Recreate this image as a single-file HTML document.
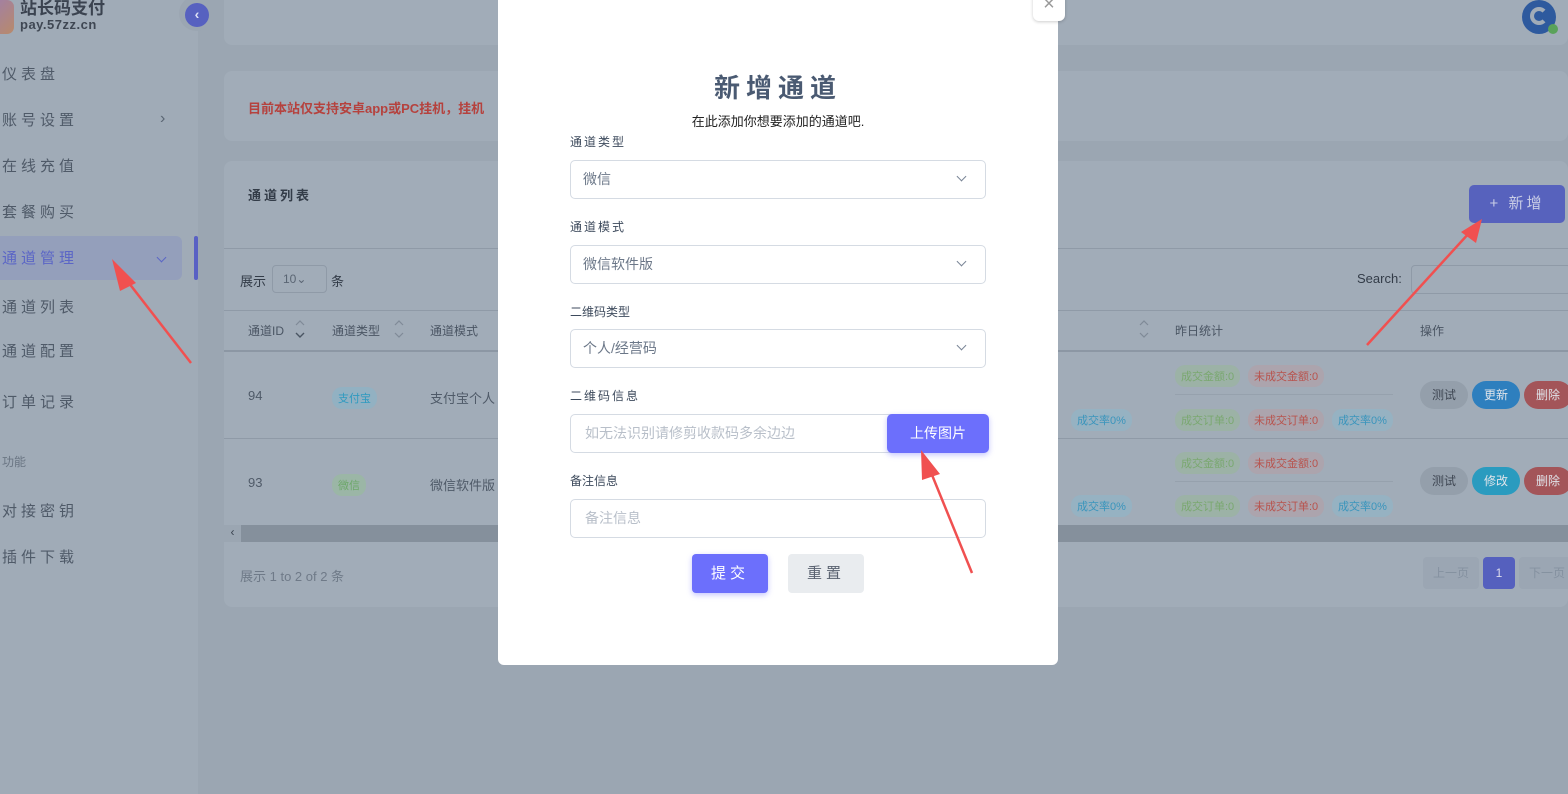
<!DOCTYPE html>
<html><head><meta charset="utf-8"><style>
*{box-sizing:border-box;margin:0;padding:0}
body{width:1568px;height:794px;overflow:hidden;background:#9ba6b2;font-family:"Liberation Sans","Noto Sans CJK SC",sans-serif;position:relative;color:#4a5563}
.a{position:absolute}
.card{position:absolute;background:#a1acb8;border-radius:8px}
.side{left:0;top:0;width:198px;height:794px;background:#a0abb7}
.nav{position:absolute;left:2px;font-size:15px;letter-spacing:4px;color:#4f5a68;line-height:18px}
.tag{position:absolute;font-size:11px;padding:3px 6px;border-radius:10px;white-space:nowrap}
.g{background:#9cb2a6;color:#7aa870}.r{background:#aca4ad;color:#b8534d}.b{background:#96b2c2;color:#3a95bc}
.btn{position:absolute;font-size:12px;color:#e0e4ea;border-radius:14px;width:48px;height:28px;line-height:28px;text-align:center}
.modal{position:absolute;left:498px;top:0;width:560px;height:665px;background:#fff;border-radius:0 0 6px 6px}
.lbl{position:absolute;left:72px;font-size:12px;color:#3d4a5c;letter-spacing:2px}
.inp{position:absolute;left:72px;width:416px;height:39px;border:1px solid #d5dbe3;border-radius:5px;font-size:14px;color:#6b7788;padding-left:12px;line-height:37px}
.chev{position:absolute;right:20px;top:12px;width:7px;height:7px;border-right:1.3px solid #7a8596;border-bottom:1.3px solid #7a8596;transform:rotate(45deg)}
.sort{position:absolute;width:12px;height:20px}
</style></head><body>
<div class="a side"></div>
<div class="a" style="left:-8px;top:0;width:22px;height:34px;border-radius:7px;background:linear-gradient(135deg,#a07fa8,#b88a6a)"></div>
<div class="a" style="left:20px;top:0;font-size:17px;line-height:18px;font-weight:bold;color:#3b4350">站长码支付</div>
<div class="a" style="left:20px;top:17px;font-size:13px;line-height:15px;color:#3f4753;letter-spacing:.5px;font-weight:bold">pay.57zz.cn</div>
<div class="a" style="left:179px;top:-4px;width:35px;height:35px;border-radius:50%;background:#9ba6b2"></div>
<div class="a" style="left:185px;top:3px;width:24px;height:24px;border-radius:50%;background:#5761c0;color:#dfe2f5;font-size:14px;text-align:center;line-height:23px;font-weight:bold">‹</div>
<div class="nav" style="top:66px">仪表盘</div>
<div class="nav" style="top:112px">账号设置</div><div class="a" style="left:160px;top:110px;color:#5a6573;font-size:16px">›</div>
<div class="nav" style="top:158px">在线充值</div>
<div class="nav" style="top:204px">套餐购买</div>
<div class="a" style="left:0;top:236px;width:182px;height:44px;background:#949fbb;border-radius:0 6px 6px 0"></div>
<div class="nav" style="top:250px;color:#5b66c6">通道管理</div>
<div class="a" style="left:158px;top:254px;width:7px;height:7px;border-right:1.3px solid #5b66c6;border-bottom:1.3px solid #5b66c6;transform:rotate(45deg)"></div>
<div class="a" style="left:194px;top:236px;width:4px;height:44px;background:#5961c4;border-radius:2px"></div>
<div class="nav" style="top:299px">通道列表</div>
<div class="nav" style="top:343px">通道配置</div>
<div class="nav" style="top:394px">订单记录</div>
<div class="a" style="left:2px;top:453px;font-size:12px;color:#6a7583">功能</div>
<div class="nav" style="top:503px">对接密钥</div>
<div class="nav" style="top:549px">插件下载</div>

<div class="card" style="left:224px;top:-10px;width:1344px;height:55px"></div>
<div class="a" style="left:1522px;top:0;width:34px;height:34px;border-radius:50%;background:#2e5a9e"></div>
<div class="a" style="left:1530px;top:7px;width:18px;height:18px;border-radius:50%;border:4px solid #a1acb8;border-right-color:transparent"></div>
<div class="a" style="left:1548px;top:24px;width:10px;height:10px;border-radius:50%;background:#5aa25a"></div>
<div class="card" style="left:224px;top:71px;width:1344px;height:70px"></div>
<div class="a" style="left:248px;top:98px;font-size:13px;font-weight:bold;color:#b5423e">目前本站仅支持安卓app或PC挂机，挂机</div>
<div class="card" style="left:224px;top:161px;width:1344px;height:446px"></div>
<div class="a" style="left:248px;top:185px;font-size:13px;font-weight:bold;color:#333c48;letter-spacing:3px">通道列表</div>
<div class="a" style="left:1469px;top:185px;width:96px;height:38px;background:#5762bd;border-radius:5px;color:#c9cde6;font-size:15px;letter-spacing:3px;line-height:38px;text-align:center">+ 新增</div>
<div class="a" style="left:224px;top:248px;width:1344px;height:1px;background:#8f9aa7"></div>
<div class="a" style="left:240px;top:271px;font-size:13px;color:#333c48">展示</div>
<div class="a" style="left:272px;top:265px;width:55px;height:28px;border:1px solid #8f9aa7;border-radius:4px;font-size:12px;color:#5a6573;padding:6px 10px">10⌄</div>
<div class="a" style="left:331px;top:271px;font-size:13px;color:#333c48">条</div>
<div class="a" style="left:1357px;top:271px;font-size:13px;color:#333c48">Search:</div>
<div class="a" style="left:1411px;top:265px;width:160px;height:29px;border:1px solid #8f9aa7;border-radius:4px"></div>
<div class="a" style="left:224px;top:310px;width:1344px;height:1px;background:#8f9aa7"></div>
<div class="a" style="left:224px;top:350px;width:1344px;height:2px;background:#8c97a4"></div>
<div class="a" style="left:248px;top:322px;font-size:12px;color:#4a5563">通道ID</div>
<div class="a" style="left:332px;top:322px;font-size:12px;color:#4a5563">通道类型</div>
<div class="a" style="left:430px;top:322px;font-size:12px;color:#4a5563">通道模式</div>
<div class="a" style="left:1175px;top:322px;font-size:12px;color:#4a5563">昨日统计</div>
<div class="a" style="left:1420px;top:322px;font-size:12px;color:#4a5563">操作</div>
<svg class="sort" style="left:294px;top:319px" viewBox="0 0 12 20"><path d="M2 6l4-4 4 4" fill="none" stroke="#7f8a97" stroke-width="1.2"/><path d="M2 14l4 4 4-4" fill="none" stroke="#4a5563" stroke-width="1.4"/></svg>
<svg class="sort" style="left:393px;top:319px" viewBox="0 0 12 20"><path d="M2 6l4-4 4 4M2 14l4 4 4-4" fill="none" stroke="#7f8a97" stroke-width="1.2"/></svg>
<svg class="sort" style="left:1138px;top:319px" viewBox="0 0 12 20"><path d="M2 6l4-4 4 4M2 14l4 4 4-4" fill="none" stroke="#7f8a97" stroke-width="1.2"/></svg>
<div class="a" style="left:248px;top:388px;font-size:13px;color:#4f5a68">94</div>
<div class="tag" style="left:332px;top:387px;background:#92b1c2;color:#2f9ac0">支付宝</div>
<div class="a" style="left:430px;top:388px;font-size:13px;color:#4f5a68">支付宝个人</div>
<div class="a" style="left:224px;top:438px;width:1344px;height:1px;background:#8f9aa7"></div>
<div class="a" style="left:248px;top:475px;font-size:13px;color:#4f5a68">93</div>
<div class="tag" style="left:332px;top:474px;background:#9bb6a6;color:#6da86a">微信</div>
<div class="a" style="left:430px;top:475px;font-size:13px;color:#4f5a68">微信软件版</div>
<div class="a" style="left:224px;top:525px;width:1344px;height:17px;background:#85909c"></div>
<div class="a" style="left:224px;top:525px;width:17px;height:17px;background:#9ba6b2;font-size:12px;text-align:center;color:#3a4350">‹</div>
<div class="a" style="left:240px;top:566px;font-size:13px;color:#6f7a88">展示 1 to 2 of 2 条</div>

<div class="tag g" style="left:1175px;top:365px">成交金额:0</div><div class="tag r" style="left:1248px;top:365px">未成交金额:0</div>
<div class="tag g" style="left:1175px;top:409px">成交订单:0</div><div class="tag r" style="left:1248px;top:409px">未成交订单:0</div><div class="tag b" style="left:1332px;top:409px">成交率0%</div>
<div class="tag b" style="left:1071px;top:409px">成交率0%</div>
<div class="tag g" style="left:1175px;top:452px">成交金额:0</div><div class="tag r" style="left:1248px;top:452px">未成交金额:0</div>
<div class="tag g" style="left:1175px;top:495px">成交订单:0</div><div class="tag r" style="left:1248px;top:495px">未成交订单:0</div><div class="tag b" style="left:1332px;top:495px">成交率0%</div>
<div class="tag b" style="left:1071px;top:495px">成交率0%</div>
<div class="a" style="left:1175px;top:394px;width:218px;height:1px;background:#96a1ad"></div>
<div class="a" style="left:1175px;top:481px;width:218px;height:1px;background:#96a1ad"></div>
<div class="btn" style="left:1420px;top:381px;background:#949fab;color:#3f4753">测试</div>
<div class="btn" style="left:1472px;top:381px;background:#2e7fbe">更新</div>
<div class="btn" style="left:1524px;top:381px;background:#a35559">删除</div>
<div class="btn" style="left:1420px;top:467px;background:#949fab;color:#3f4753">测试</div>
<div class="btn" style="left:1472px;top:467px;background:#2a9bbf">修改</div>
<div class="btn" style="left:1524px;top:467px;background:#a35559">删除</div>
<div class="a" style="left:1423px;top:557px;width:56px;height:32px;background:#9ba6b3;border-radius:4px;font-size:12px;color:#8591a0;text-align:center;line-height:32px">上一页</div>
<div class="a" style="left:1483px;top:557px;width:32px;height:32px;background:#5560be;border-radius:4px;font-size:12px;color:#dde;text-align:center;line-height:32px">1</div>
<div class="a" style="left:1519px;top:557px;width:56px;height:32px;background:#9ba6b3;border-radius:4px;font-size:12px;color:#8591a0;text-align:center;line-height:32px">下一页</div>

<div class="modal">
<div class="a" style="left:535px;top:-8px;width:32px;height:29px;background:#fff;border-radius:6px;box-shadow:0 1px 3px rgba(0,0,0,.2);text-align:center;font-size:20px;color:#999;line-height:24px">×</div>
<div class="a" style="left:0;width:560px;top:68px;text-align:center;font-size:26px;font-weight:bold;color:#4a5a72;letter-spacing:6px">新增通道</div>
<div class="a" style="left:0;width:560px;top:111px;text-align:center;font-size:13px;color:#222">在此添加你想要添加的通道吧.</div>
<div class="lbl" style="top:133px">通道类型</div>
<div class="inp" style="top:160px">微信<span class="chev"></span></div>
<div class="lbl" style="top:218px">通道模式</div>
<div class="inp" style="top:245px">微信软件版<span class="chev"></span></div>
<div class="lbl" style="top:303px;letter-spacing:0">二维码类型</div>
<div class="inp" style="top:329px">个人/经营码<span class="chev"></span></div>
<div class="lbl" style="top:387px">二维码信息</div>
<div class="inp" style="top:414px;color:#b8bfc9;padding-left:14px">如无法识别请修剪收款码多余边边</div>
<div class="a" style="left:389px;top:414px;width:102px;height:39px;background:#6c6ffc;border-radius:5px;color:#fff;font-size:14px;text-align:center;line-height:39px;box-shadow:0 2px 6px rgba(108,111,252,.4)">上传图片</div>
<div class="lbl" style="top:472px;letter-spacing:0">备注信息</div>
<div class="inp" style="top:499px;color:#b8bfc9;padding-left:14px">备注信息</div>
<div class="a" style="left:194px;top:554px;width:76px;height:39px;background:#6c6ffc;border-radius:4px;color:#fff;font-size:15px;text-align:center;line-height:39px;letter-spacing:4px;box-shadow:0 2px 6px rgba(108,111,252,.4)">提交</div>
<div class="a" style="left:290px;top:554px;width:76px;height:39px;background:#e9ecef;border-radius:4px;color:#5a6270;font-size:15px;text-align:center;line-height:39px;letter-spacing:4px">重置</div>
</div>

<svg class="a" style="left:0;top:0" width="1568" height="794">
<g fill="#f05050" stroke="#f05050" stroke-width="2.5">
<line x1="191" y1="363" x2="125" y2="278"/><polygon points="112,259 136,283 120,291" stroke="none"/>
<line x1="1367" y1="345" x2="1470" y2="232"/><polygon points="1482,219 1476,243 1461,232" stroke="none"/>
<line x1="972" y1="573" x2="930" y2="470"/><polygon points="921,450 940,474 922,480" stroke="none"/>
</g></svg>
</body></html>
